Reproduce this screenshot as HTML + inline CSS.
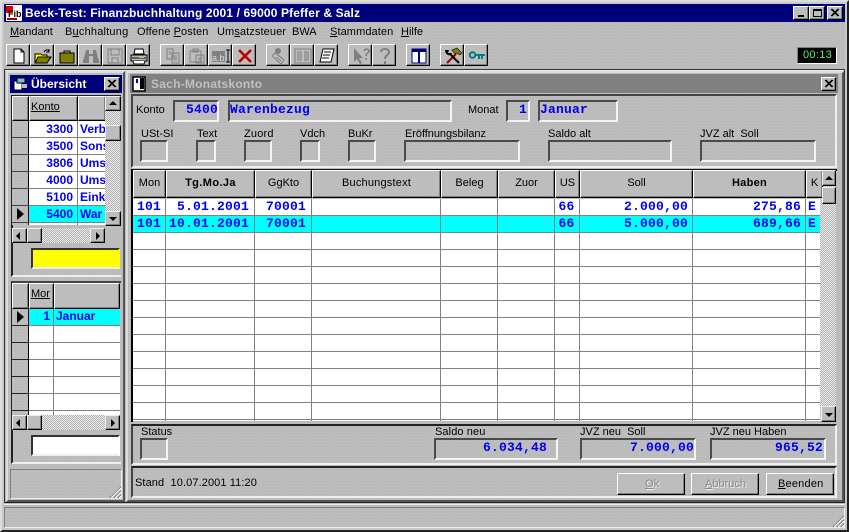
<!DOCTYPE html>
<html><head><meta charset="utf-8"><title>Beck-Test</title>
<style>
*{box-sizing:border-box}
html,body{margin:0;padding:0}
body{width:849px;height:532px;position:relative;overflow:hidden;background:#bcbcbc;font:11px/13px "Liberation Sans",sans-serif;color:#000}
div,svg{position:absolute}
.bg{background-color:#bbb;background-image:radial-gradient(#c4c4c4 .6px,transparent .7px);background-size:3px 3px}
.t{position:absolute;white-space:nowrap;line-height:13px}
.sunk{border:2px solid;border-color:#4a4a4a #f4f4f4 #f4f4f4 #4a4a4a}
.btn{background:#bdbdbd;border:1px solid;border-color:#fff #000 #000 #fff;box-shadow:inset -1px -1px 0 #808080}
.sb{background:#bdbdbd;border:1px solid;border-color:#eee #000 #000 #eee;box-shadow:inset -1px -1px 0 #808080}
.chk{background-color:#fff;background-image:conic-gradient(#b0b0b0 25%,#ececec 0 50%,#b0b0b0 0 75%,#ececec 0);background-size:2px 2px}
.f{font-family:"Liberation Mono",monospace;font-weight:bold;font-size:13px;color:#0000f0;letter-spacing:.2px;text-align:right}
.m{font-weight:bold;font-size:12px;color:#0000f0}
.h{text-align:center;top:177px}
.hc{top:170px;height:28px;background:#bdbdbd;border:1px solid;border-color:#fff #000 #000 #fff;box-shadow:inset -1px -1px 0 #808080}
.c{width:1px;background:#808080}
.tb{top:44px;width:24px;height:22px}
.tb svg{left:3px;top:2px}
.up{width:0;height:0;border-left:4px solid transparent;border-right:4px solid transparent;border-bottom:4px solid #000}
.dn{width:0;height:0;border-left:4px solid transparent;border-right:4px solid transparent;border-top:4px solid #000}
.lf{width:0;height:0;border-top:4px solid transparent;border-bottom:4px solid transparent;border-right:4px solid #000}
.rt{width:0;height:0;border-top:4px solid transparent;border-bottom:4px solid transparent;border-left:4px solid #000}
.gr{color:#8a8a8a;text-shadow:1px 1px 0 #eee}
</style></head><body>
<div class="bg" style="left:0;top:0;width:849px;height:532px;border:2px solid;border-color:#ddd #222 #222 #ddd"></div>
<div style="left:2px;top:2px;width:845px;height:528px;border:2px solid #c8c8c8"></div>

<!-- title bar -->
<div style="left:4px;top:4px;width:841px;height:18px;background:#00007b"></div>
<div style="left:6px;top:5px;width:16px;height:16px;background:#fff"></div>
<div style="left:6px;top:6px;width:7px;height:7px;background:#e00000"></div>
<div class="t" style="left:8px;top:9px;font:bold 9px/10px 'Liberation Sans',sans-serif;color:#000">Fib</div>
<div style="left:7px;top:18px;width:10px;height:2px;background:#900"></div>
<div class="t" style="left:25px;top:5px;color:#fff;font:bold 12px/16px 'Liberation Sans',sans-serif;letter-spacing:.13px">Beck-Test: Finanzbuchhaltung 2001 / 69000 Pfeffer &amp; Salz</div>
<div class="btn" style="left:793px;top:6px;width:16px;height:14px"><div style="left:4px;top:8px;width:6px;height:2px;background:#000"></div></div>
<div class="btn" style="left:809px;top:6px;width:16px;height:14px"><div style="left:3px;top:2px;width:9px;height:8px;border:1px solid #000;border-top-width:2px"></div></div>
<div class="btn" style="left:827px;top:6px;width:16px;height:14px"><svg width="14" height="12" style="left:0;top:0"><path d="M3 2l7 7M4 2l7 7M10 2l-7 7M11 2l-7 7" stroke="#000" fill="none"/></svg></div>

<!-- menu -->
<div class="t" style="left:10px;top:26px"><u>M</u>andant</div>
<div class="t" style="left:65px;top:26px;letter-spacing:.2px">B<u>u</u>chhaltung</div>
<div class="t" style="left:137px;top:26px;letter-spacing:.1px">Offene <u>P</u>osten</div>
<div class="t" style="left:217px;top:26px;letter-spacing:.1px">Um<u>s</u>atzsteuer</div>
<div class="t" style="left:292px;top:26px">BWA</div>
<div class="t" style="left:330px;top:26px;letter-spacing:.1px"><u>S</u>tammdaten</div>
<div class="t" style="left:401px;top:26px"><u>H</u>ilfe</div>

<!-- toolbar -->
<div class="btn tb" style="left:6px"><svg width="18" height="18"><path d="M4 2h7l3 3v11H4z" fill="#fff" stroke="#000"/><path d="M11 2v3h3" fill="none" stroke="#000"/></svg></div>
<div class="btn tb" style="left:30px"><svg width="18" height="18"><path d="M1 7h6l1 1h5v8H1z" fill="#ff0" stroke="#000"/><path d="M1 16l3-6h13l-4 6z" fill="#808000" stroke="#000"/><path d="M10 5c1-2 3-3 5-1M15 2v3h-3" fill="none" stroke="#000"/></svg></div>
<div class="btn tb" style="left:54px"><svg width="18" height="18"><path d="M2 6h14v10H2z" fill="#808000" stroke="#000"/><path d="M6 6V4h6v2" fill="none" stroke="#000"/></svg></div>
<div class="btn tb" style="left:78px"><svg width="18" height="18"><path d="M4 3h3v4h4V3h3l1 4 2 7v2h-6V9H7v7H1v-2l2-7z" fill="#808080"/></svg></div>
<div class="btn tb" style="left:102px"><svg width="18" height="18"><path d="M2 2h14v14H2z" fill="none" stroke="#808080"/><path d="M5 2v6h8V2M6 16v-5h6v5" fill="none" stroke="#808080"/></svg></div>
<div class="btn tb" style="left:126px"><svg width="18" height="18"><path d="M5 2h8l1 5H4z" fill="#fff" stroke="#000"/><path d="M1 8h16v6H1z" fill="#bbb" stroke="#000"/><path d="M3 14l1 3h10l1-3M2 11h14" fill="#fff" stroke="#000"/><path d="M9 10h5v1H9z" fill="#cc0"/></svg></div>

<div class="btn tb" style="left:160px"><svg width="18" height="18"><path d="M3 2h6v10H3zM8 6h7v10H8z" fill="none" stroke="#808080"/><path d="M10 9h3M10 11h3M10 13h3M5 5h2M5 7h2" stroke="#808080"/></svg></div>
<div class="btn tb" style="left:184px"><svg width="18" height="18"><path d="M2 4h11v11H2zM8 8h8v8H8zM5 2h5v3H5z" fill="none" stroke="#808080"/><path d="M10 11h4M10 13h4" stroke="#808080"/></svg></div>
<div class="btn tb" style="left:208px"><svg width="18" height="18"><path d="M0 4h13v11H0z" fill="#808080"/><path d="M14 3h4M14 15h4M16 3v12" stroke="#000" fill="none"/></svg><div class="t" style="left:3px;top:7px;font-size:9px;color:#ddd">a.b</div></div>
<div class="btn tb" style="left:232px"><svg width="18" height="18"><path d="M3 3l12 12M15 3L3 15" stroke="#c00000" stroke-width="2.6" fill="none"/></svg></div>

<div class="btn tb" style="left:266px"><svg width="18" height="18"><path d="M5 6l9 7-3 4-9-8z" fill="none" stroke="#808080"/><circle cx="8" cy="4" r="3" fill="#808080"/><path d="M6 10l5 4M8 8l5 4" stroke="#808080"/></svg></div>
<div class="btn tb" style="left:290px"><svg width="18" height="18"><path d="M1 2h16v14H1z" fill="none" stroke="#808080"/><path d="M3 5h5M3 7h5M3 9h5M3 11h5M3 13h5M10 5h5M10 7h5M10 9h5M10 11h5M10 13h5" stroke="#808080"/></svg></div>
<div class="btn tb" style="left:314px"><svg width="18" height="18"><path d="M5 2h11l-3 13H2z" fill="#fff" stroke="#000"/><path d="M6 5h7M5 8h7M4 11h7" stroke="#000"/></svg></div>

<div class="btn tb" style="left:348px"><svg width="18" height="18"><path d="M2 1v14l3-3 3 5 2-1-3-5h4z" fill="#808080"/><path d="M12 4c1-3 5-2 5 0s-3 2-3 5M14 11v2" fill="none" stroke="#808080" stroke-width="1.6"/></svg></div>
<div class="btn tb" style="left:372px"><svg width="18" height="18"><path d="M5 5c0-4 8-4 8 0 0 3-4 3-4 7M9 14v3" fill="none" stroke="#808080" stroke-width="2"/></svg></div>

<div class="btn tb" style="left:406px"><svg width="18" height="18"><path d="M2 2h14v14H2z" fill="#fff" stroke="#00007b"/><path d="M2 2h14v3H2zM8 2h2v14H8z" fill="#00007b"/></svg></div>
<div class="btn tb" style="left:440px"><svg width="18" height="18"><path d="M3 16L12 7" stroke="#900" stroke-width="2" fill="none"/><path d="M8 3l5-2 5 5-2 2-3-2-2 1z" fill="#808000" stroke="#000" stroke-width=".6"/><path d="M15 16L6 7" stroke="#000" stroke-width="2" fill="none"/><path d="M1 3c0 3 2 6 6 5L8 6 4 6 5 3z" fill="#000"/></svg></div>
<div class="btn tb" style="left:464px"><svg width="18" height="18"><circle cx="4.500" cy="8" r="2.800" fill="none" stroke="#008080" stroke-width="2"/><path d="M7 7h10v2h-2v3h-2V9h-1v3h-2V9H7z" fill="#008080"/></svg></div>

<div style="left:797px;top:47px;width:40px;height:17px;background:#000;border:1px solid;border-color:#808080 #fff #fff #808080"></div>
<div class="t" style="left:803px;top:49px;color:#60f070;font-size:11px;letter-spacing:.3px">00:13</div>

<!-- MDI frame -->
<div style="left:4px;top:69px;width:841px;height:434px;border:1px solid;border-color:#333 #333 #222 #333"></div>
<div style="left:5px;top:70px;width:839px;height:1px;background:#eee"></div>

<!-- left window -->
<div style="left:6px;top:71px;width:119px;height:431px;border:2px solid;border-color:#ddd #555 #555 #ddd"></div>
<div style="left:10px;top:75px;width:112px;height:18px;background:#00007b"></div>
<svg width="16" height="14" style="left:13px;top:77px"><path d="M1 4h8v9H1z" fill="#fff" stroke="#000"/><path d="M4 1h8v5H4z" fill="#6cc" stroke="#000"/><path d="M9 7h5v4H9z" fill="#bbb"/></svg>
<div class="t" style="left:31px;top:76px;color:#fff;font:bold 12px/16px 'Liberation Sans',sans-serif">Übersicht</div>
<div class="btn" style="left:104px;top:77px;width:16px;height:14px"><svg width="14" height="12" style="left:0;top:0"><path d="M3 2l7 7M4 2l7 7M10 2l-7 7M11 2l-7 7" stroke="#000" fill="none"/></svg></div>

<!-- upper grid -->
<div style="left:11px;top:95px;width:110px;height:182px;border-left:2px solid #222;border-bottom:2px solid #eee;border-top:1px solid #222"></div>
<div class="hc" style="left:12px;top:96px;width:17px;height:25px"></div>
<div class="hc" style="left:29px;top:96px;width:49px;height:25px"></div>
<div class="hc" style="left:78px;top:96px;width:28px;height:25px"></div>
<div class="t" style="left:31px;top:101px"><u>Konto</u></div>
<div style="left:12px;top:121px;width:93px;height:104px;background:#fff;overflow:hidden">
  <div style="left:0;top:0;width:93px;height:104px;background:repeating-linear-gradient(to bottom,#fff 0 16px,#808080 16px 17px)"></div>
  <div style="left:0;top:85px;width:93px;height:16px;background:#0ff"></div>
  <div class="bg" style="left:0;top:0;width:16px;height:104px"></div>
  <div style="left:0;top:0;width:16px;height:104px;background:repeating-linear-gradient(to bottom,transparent 0 16px,#444 16px 17px)"></div>
  <div style="left:16px;top:0;width:1px;height:104px;background:#000"></div>
  <div class="c" style="left:65px;top:0;height:104px"></div>
  <div class="rt" style="left:5px;top:87px;border-left-width:7px;border-top-width:6px;border-bottom-width:6px"></div>
  <div class="t m" style="left:17px;top:2px;width:44px;text-align:right">3300</div><div class="t m" style="left:68px;top:2px">Verb</div>
  <div class="t m" style="left:17px;top:19px;width:44px;text-align:right">3500</div><div class="t m" style="left:68px;top:19px">Sons</div>
  <div class="t m" style="left:17px;top:36px;width:44px;text-align:right">3806</div><div class="t m" style="left:68px;top:36px">Ums</div>
  <div class="t m" style="left:17px;top:53px;width:44px;text-align:right">4000</div><div class="t m" style="left:68px;top:53px">Ums</div>
  <div class="t m" style="left:17px;top:70px;width:44px;text-align:right">5100</div><div class="t m" style="left:68px;top:70px">Eink</div>
  <div class="t m" style="left:17px;top:87px;width:44px;text-align:right">5400</div><div class="t m" style="left:68px;top:87px">War</div>
  <div class="t m" style="left:17px;top:104px;width:44px;text-align:right">5500</div>
</div>
<div class="chk" style="left:105px;top:96px;width:15px;height:129px"></div>
<div class="sb" style="left:105px;top:96px;width:16px;height:15px"><div class="up" style="left:3px;top:4px"></div></div>
<div class="sb" style="left:105px;top:125px;width:16px;height:16px"></div>
<div class="sb" style="left:105px;top:211px;width:16px;height:15px"><div class="dn" style="left:3px;top:5px"></div></div>
<div class="chk" style="left:12px;top:228px;width:93px;height:15px"></div>
<div class="sb" style="left:12px;top:228px;width:15px;height:15px"><div class="lf" style="left:3px;top:3px"></div></div>
<div class="sb" style="left:27px;top:228px;width:15px;height:15px"></div>
<div class="sb" style="left:90px;top:228px;width:15px;height:15px"><div class="rt" style="left:5px;top:3px"></div></div>
<div style="left:31px;top:248px;width:89px;height:21px;background:#ff0;border:2px solid;border-color:#333 #ff0 #eee #333"></div>

<!-- lower grid -->
<div style="left:11px;top:281px;width:110px;height:183px;border-left:2px solid #222;border-top:2px solid #444;border-bottom:2px solid #eee"></div>
<div class="hc" style="left:12px;top:283px;width:17px;height:26px"></div>
<div class="hc" style="left:29px;top:283px;width:25px;height:26px"></div>
<div class="hc" style="left:54px;top:283px;width:66px;height:26px"></div>
<div class="t" style="left:31px;top:288px"><u>Mor</u></div>
<div style="left:12px;top:309px;width:108px;height:106px;background:#fff;overflow:hidden">
  <div style="left:0;top:0;width:108px;height:106px;background:repeating-linear-gradient(to bottom,#fff 0 16px,#808080 16px 17px)"></div>
  <div style="left:0;top:0;width:108px;height:16px;background:#0ff"></div>
  <div class="bg" style="left:0;top:0;width:16px;height:106px"></div>
  <div style="left:0;top:0;width:16px;height:106px;background:repeating-linear-gradient(to bottom,transparent 0 16px,#222 16px 17px)"></div>
  <div style="left:16px;top:0;width:1px;height:106px;background:#000"></div>
  <div class="c" style="left:41px;top:0;height:106px"></div>
  <div class="rt" style="left:5px;top:2px;border-left-width:7px;border-top-width:6px;border-bottom-width:6px"></div>
  <div class="t m" style="left:18px;top:1px;width:20px;text-align:right">1</div>
  <div class="t m" style="left:44px;top:1px">Januar</div>
</div>
<div class="chk" style="left:12px;top:415px;width:108px;height:15px"></div>
<div class="sb" style="left:12px;top:415px;width:15px;height:15px"><div class="lf" style="left:3px;top:3px"></div></div>
<div class="sb" style="left:27px;top:415px;width:15px;height:15px"></div>
<div class="sb" style="left:105px;top:415px;width:15px;height:15px"><div class="rt" style="left:5px;top:3px"></div></div>
<div style="left:31px;top:435px;width:89px;height:21px;background:#fff;border:2px solid;border-color:#333 #fff #eee #333"></div>
<div style="left:10px;top:469px;width:112px;height:30px;border:1px solid;border-color:#808080 #eee #eee #808080"></div>
<svg width="13" height="13" style="left:109px;top:486px"><path d="M12 1L1 12M12 5L5 12M12 9l-3 3" stroke="#666" fill="none"/><path d="M12 2L2 12M12 6l-6 6M12 10l-2 2" stroke="#fff" fill="none"/></svg>

<!-- right window -->
<div style="left:126px;top:71px;width:718px;height:431px;border:2px solid;border-color:#ddd #555 #555 #ddd"></div>
<div style="left:130px;top:74px;width:708px;height:19px;background:#808080"></div>
<svg width="16" height="16" style="left:132px;top:76px"><path d="M1 1h12v14H1z" fill="#fff" stroke="#000" stroke-width="1.500"/><path d="M8 2h4v11H8z" fill="#000"/><path d="M4 3h2v4H4z" fill="#00c"/></svg>
<div class="t" style="left:151px;top:76px;color:#c0c0c0;font:bold 12px/16px 'Liberation Sans',sans-serif;letter-spacing:.25px">Sach-Monatskonto</div>
<div class="btn" style="left:821px;top:77px;width:15px;height:14px"><svg width="13" height="12" style="left:0;top:0"><path d="M3 2l7 7M4 2l7 7M10 2l-7 7M11 2l-7 7" stroke="#000" fill="none"/></svg></div>

<!-- top form panel -->
<div style="left:131px;top:94px;width:706px;height:74px;border:2px solid;border-color:#444 #eee #eee #444"></div>
<div class="t" style="left:136px;top:104px">Konto</div>
<div class="sunk" style="left:173px;top:100px;width:46px;height:22px"></div>
<div class="t f" style="left:176px;top:103px;width:42px">5400</div>
<div class="sunk" style="left:228px;top:100px;width:224px;height:22px"></div>
<div class="t f" style="left:230px;top:103px;text-align:left">Warenbezug</div>
<div class="t" style="left:468px;top:104px">Monat</div>
<div class="sunk" style="left:506px;top:100px;width:24px;height:22px"></div>
<div class="t f" style="left:508px;top:103px;width:19px">1</div>
<div class="sunk" style="left:538px;top:100px;width:80px;height:22px"></div>
<div class="t f" style="left:540px;top:103px;text-align:left">Januar</div>

<div class="t" style="left:141px;top:128px">USt-SI</div>
<div class="t" style="left:197px;top:128px">Text</div>
<div class="t" style="left:244px;top:128px;letter-spacing:.2px">Zuord</div>
<div class="t" style="left:300px;top:128px">Vdch</div>
<div class="t" style="left:348px;top:128px">BuKr</div>
<div class="t" style="left:405px;top:128px;letter-spacing:-.05px">Eröffnungsbilanz</div>
<div class="t" style="left:548px;top:128px">Saldo alt</div>
<div class="t" style="left:700px;top:128px">JVZ alt&nbsp; Soll</div>
<div class="sunk" style="left:140px;top:140px;width:28px;height:22px"></div>
<div class="sunk" style="left:196px;top:140px;width:20px;height:22px"></div>
<div class="sunk" style="left:244px;top:140px;width:28px;height:22px"></div>
<div class="sunk" style="left:300px;top:140px;width:20px;height:22px"></div>
<div class="sunk" style="left:348px;top:140px;width:28px;height:22px"></div>
<div class="sunk" style="left:404px;top:140px;width:116px;height:22px"></div>
<div class="sunk" style="left:548px;top:140px;width:124px;height:22px"></div>
<div class="sunk" style="left:700px;top:140px;width:116px;height:22px"></div>

<!-- main grid -->
<div style="left:131px;top:169px;width:706px;height:2px;background:#111"></div>
<div style="left:131px;top:169px;width:2px;height:253px;background:#000"></div>
<div class="chk" style="left:820px;top:170px;width:16px;height:251px"></div>
<div style="left:133px;top:199px;width:687px;height:222px;background:repeating-linear-gradient(to bottom,#fff 0 16px,#808080 16px 17px)"></div>
<div style="left:133px;top:216px;width:687px;height:16px;background:#0ff"></div>
<div class="c" style="left:165px;top:199px;height:222px"></div>
<div class="c" style="left:254px;top:199px;height:222px"></div>
<div class="c" style="left:311px;top:199px;height:222px"></div>
<div class="c" style="left:440px;top:199px;height:222px"></div>
<div class="c" style="left:497px;top:199px;height:222px"></div>
<div class="c" style="left:554px;top:199px;height:222px"></div>
<div class="c" style="left:579px;top:199px;height:222px"></div>
<div class="c" style="left:692px;top:199px;height:222px"></div>
<div class="c" style="left:805px;top:199px;height:222px"></div>
<div class="hc" style="left:133px;width:33px"></div>
<div class="hc" style="left:166px;width:89px"></div>
<div class="hc" style="left:255px;width:57px"></div>
<div class="hc" style="left:312px;width:129px"></div>
<div class="hc" style="left:441px;width:57px"></div>
<div class="hc" style="left:498px;width:57px"></div>
<div class="hc" style="left:555px;width:25px"></div>
<div class="hc" style="left:580px;width:113px"></div>
<div class="hc" style="left:693px;width:113px"></div>
<div class="hc" style="left:806px;width:17px"></div>
<div class="t h" style="left:133px;width:33px">Mon</div>
<div class="t h" style="left:166px;width:89px;font-weight:bold;letter-spacing:.4px">Tg.Mo.Ja</div>
<div class="t h" style="left:255px;width:57px">GgKto</div>
<div class="t h" style="left:312px;width:129px;letter-spacing:.2px">Buchungstext</div>
<div class="t h" style="left:441px;width:57px">Beleg</div>
<div class="t h" style="left:498px;width:57px">Zuor</div>
<div class="t h" style="left:555px;width:25px">US</div>
<div class="t h" style="left:580px;width:113px">Soll</div>
<div class="t h" style="left:693px;width:113px;font-weight:bold;letter-spacing:.3px">Haben</div>
<div class="t h" style="left:806px;width:17px">K</div>
<div class="sb" style="left:822px;top:170px;width:14px;height:16px"><div class="up" style="left:2px;top:5px"></div></div>
<div class="sb" style="left:822px;top:187px;width:14px;height:17px"></div>
<div class="sb" style="left:821px;top:406px;width:15px;height:16px"><div class="dn" style="left:3px;top:6px"></div></div>

<div class="t f" style="left:137px;top:200px">101</div>
<div class="t f" style="left:167px;top:200px;width:82px">5.01.2001</div>
<div class="t f" style="left:256px;top:200px;width:50px">70001</div>
<div class="t f" style="left:556px;top:200px;width:21px;text-align:center">66</div>
<div class="t f" style="left:581px;top:200px;width:107px">2.000,00</div>
<div class="t f" style="left:694px;top:200px;width:107px">275,86</div>
<div class="t f" style="left:808px;top:200px;text-align:left">E</div>
<div class="t f" style="left:137px;top:217px">101</div>
<div class="t f" style="left:167px;top:217px;width:82px">10.01.2001</div>
<div class="t f" style="left:256px;top:217px;width:50px">70001</div>
<div class="t f" style="left:556px;top:217px;width:21px;text-align:center">66</div>
<div class="t f" style="left:581px;top:217px;width:107px">5.000,00</div>
<div class="t f" style="left:694px;top:217px;width:107px">689,66</div>
<div class="t f" style="left:808px;top:217px;text-align:left">E</div>

<!-- bottom panel -->
<div style="left:131px;top:424px;width:706px;height:41px;border:2px solid;border-color:#222 #eee #eee #444"></div>
<div class="t" style="left:141px;top:426px">Status</div>
<div class="sunk" style="left:140px;top:438px;width:28px;height:22px"></div>
<div class="t" style="left:435px;top:426px;letter-spacing:.1px">Saldo neu</div>
<div class="sunk" style="left:434px;top:438px;width:124px;height:22px"></div>
<div class="t f" style="left:436px;top:441px;width:111px">6.034,48</div>
<div class="t" style="left:580px;top:426px">JVZ neu&nbsp; Soll</div>
<div class="sunk" style="left:580px;top:438px;width:116px;height:22px"></div>
<div class="t f" style="left:582px;top:441px;width:112px">7.000,00</div>
<div class="t" style="left:710px;top:426px">JVZ neu Haben</div>
<div class="sunk" style="left:710px;top:438px;width:116px;height:22px"></div>
<div class="t f" style="left:712px;top:441px;width:111px">965,52</div>

<div style="left:131px;top:466px;width:706px;height:32px;border:2px solid;border-color:#222 #eee #eee #444"></div>
<div class="t" style="left:135px;top:477px;letter-spacing:.1px">Stand&nbsp; 10.07.2001 11:20</div>
<div class="btn" style="left:617px;top:473px;width:68px;height:22px"></div>
<div class="t gr" style="left:645px;top:478px"><u>O</u>k</div>
<div class="btn" style="left:691px;top:473px;width:68px;height:22px"></div>
<div class="t gr" style="left:705px;top:478px"><u>A</u>bbruch</div>
<div class="btn" style="left:766px;top:473px;width:68px;height:22px"></div>
<div class="t" style="left:778px;top:478px;letter-spacing:.2px"><u>B</u>eenden</div>

<!-- status bar -->
<div style="left:4px;top:504px;width:841px;height:1px;background:#eee"></div>
<div style="left:4px;top:507px;width:841px;height:21px;border:1px solid;border-color:#808080 #eee #eee #808080"></div>
<svg width="13" height="13" style="left:832px;top:515px"><path d="M12 1L1 12M12 5L5 12M12 9l-3 3" stroke="#666" fill="none"/><path d="M12 2L2 12M12 6l-6 6M12 10l-2 2" stroke="#fff" fill="none"/></svg>
</body></html>
